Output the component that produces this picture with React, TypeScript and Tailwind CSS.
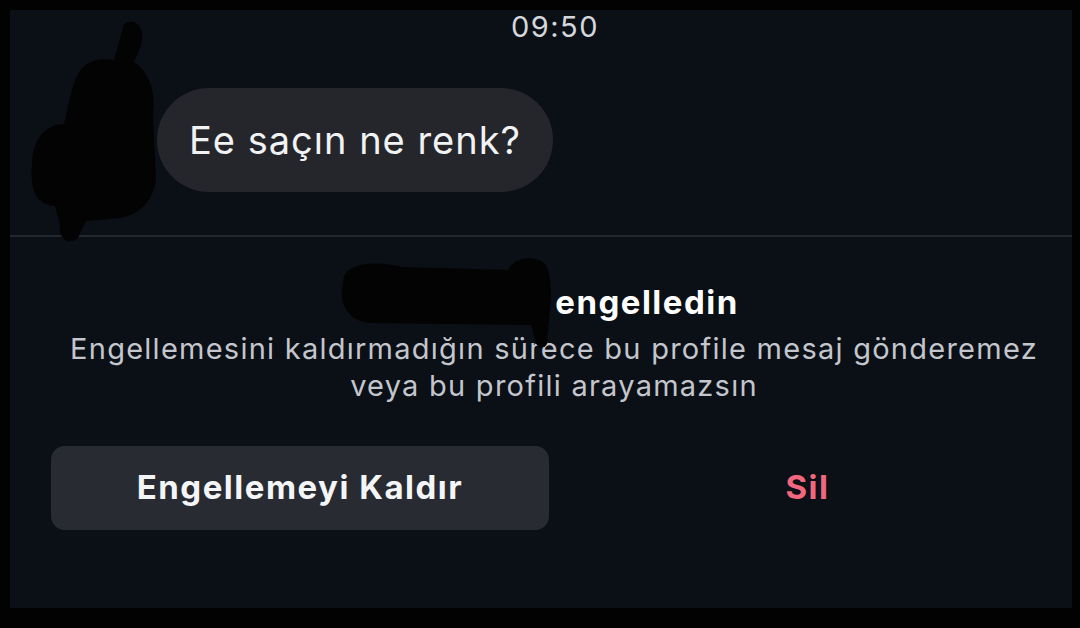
import React from "react";

export default function App() {
  const font = { fontFamily: "Inter, 'Noto Sans', Arial, sans-serif" };
  return (
    <div className="w-[1080px] h-[628px] bg-[#020202] pt-[10px] pl-[10px] overflow-hidden" style={font}>
      <div className="relative w-[1062px] h-[598px] bg-[#0b0f16] flex flex-col">
        <div className="h-[34px] flex items-center justify-center pl-[28px] text-[29px] text-[#d4d7dc] tracking-[1.5px]">
          09:50
        </div>
        <div className="h-[191px] pt-[44px] pl-[147px]">
          <div className="w-[396px] h-[104px] rounded-full bg-[#24262b] flex items-center pl-[32px] text-[38px] text-[#f1f2f4] tracking-[1px]">
            Ee saçın ne renk?
          </div>
        </div>
        <div className="h-[2px] bg-[#232730]" />
        <div className="flex flex-col items-center pt-[45px]">
          <div className="text-[33px] font-bold text-white leading-[40px] flex tracking-[1.5px]">
            <span className="text-[#0b0f16] w-[212px] inline-block overflow-hidden">kullanıcı</span>
            <span>engelledin</span>
          </div>
          <div className="mt-[8px] pl-[26px] text-[29px] text-[#c3c6cc] leading-[37px] text-center tracking-[1.25px]">
            <div>Engellemesini kaldırmadığın sürece bu profile mesaj gönderemez</div>
            <div>veya bu profili arayamazsın</div>
          </div>
        </div>
        <div className="flex items-center mt-[42px] pl-[41px]">
          <div className="w-[498px] h-[84px] rounded-[14px] bg-[#282b31] flex items-center justify-center text-[33px] font-bold text-[#f4f5f7] tracking-[1.5px]">
            Engellemeyi Kaldır
          </div>
          <div className="flex-1 flex items-center justify-center text-[33px] font-bold text-[#f0677e] pr-[6px] tracking-[1.5px]">
            Sil
          </div>
        </div>

        <svg className="absolute left-[-10px] top-[-10px]" width="1080" height="628" viewBox="0 0 1080 628">
          <path
            fill="#030304"
            d="M124,24 C136,17 146,28 141,46 L134,62 C150,72 156,95 153,112 L156,180 C153,200 141,214 120,218 L86,221 L78,238 C68,246 58,238 60,225 L55,206 C36,205 30,190 32,165 C32,140 45,124 64,124 C70,100 72,80 82,68 C90,60 102,58 114,60 Z"
          />
          <path
            fill="#030304"
            d="M344,276 C350,262 380,261 402,267 L508,270 C514,257 536,254 546,265 C553,280 551,300 549,320 L547,344 C544,350 536,348 535,340 L531,325 L372,323 C351,323 340,306 342,290 Z"
          />
        </svg>
      </div>
    </div>
  );
}
